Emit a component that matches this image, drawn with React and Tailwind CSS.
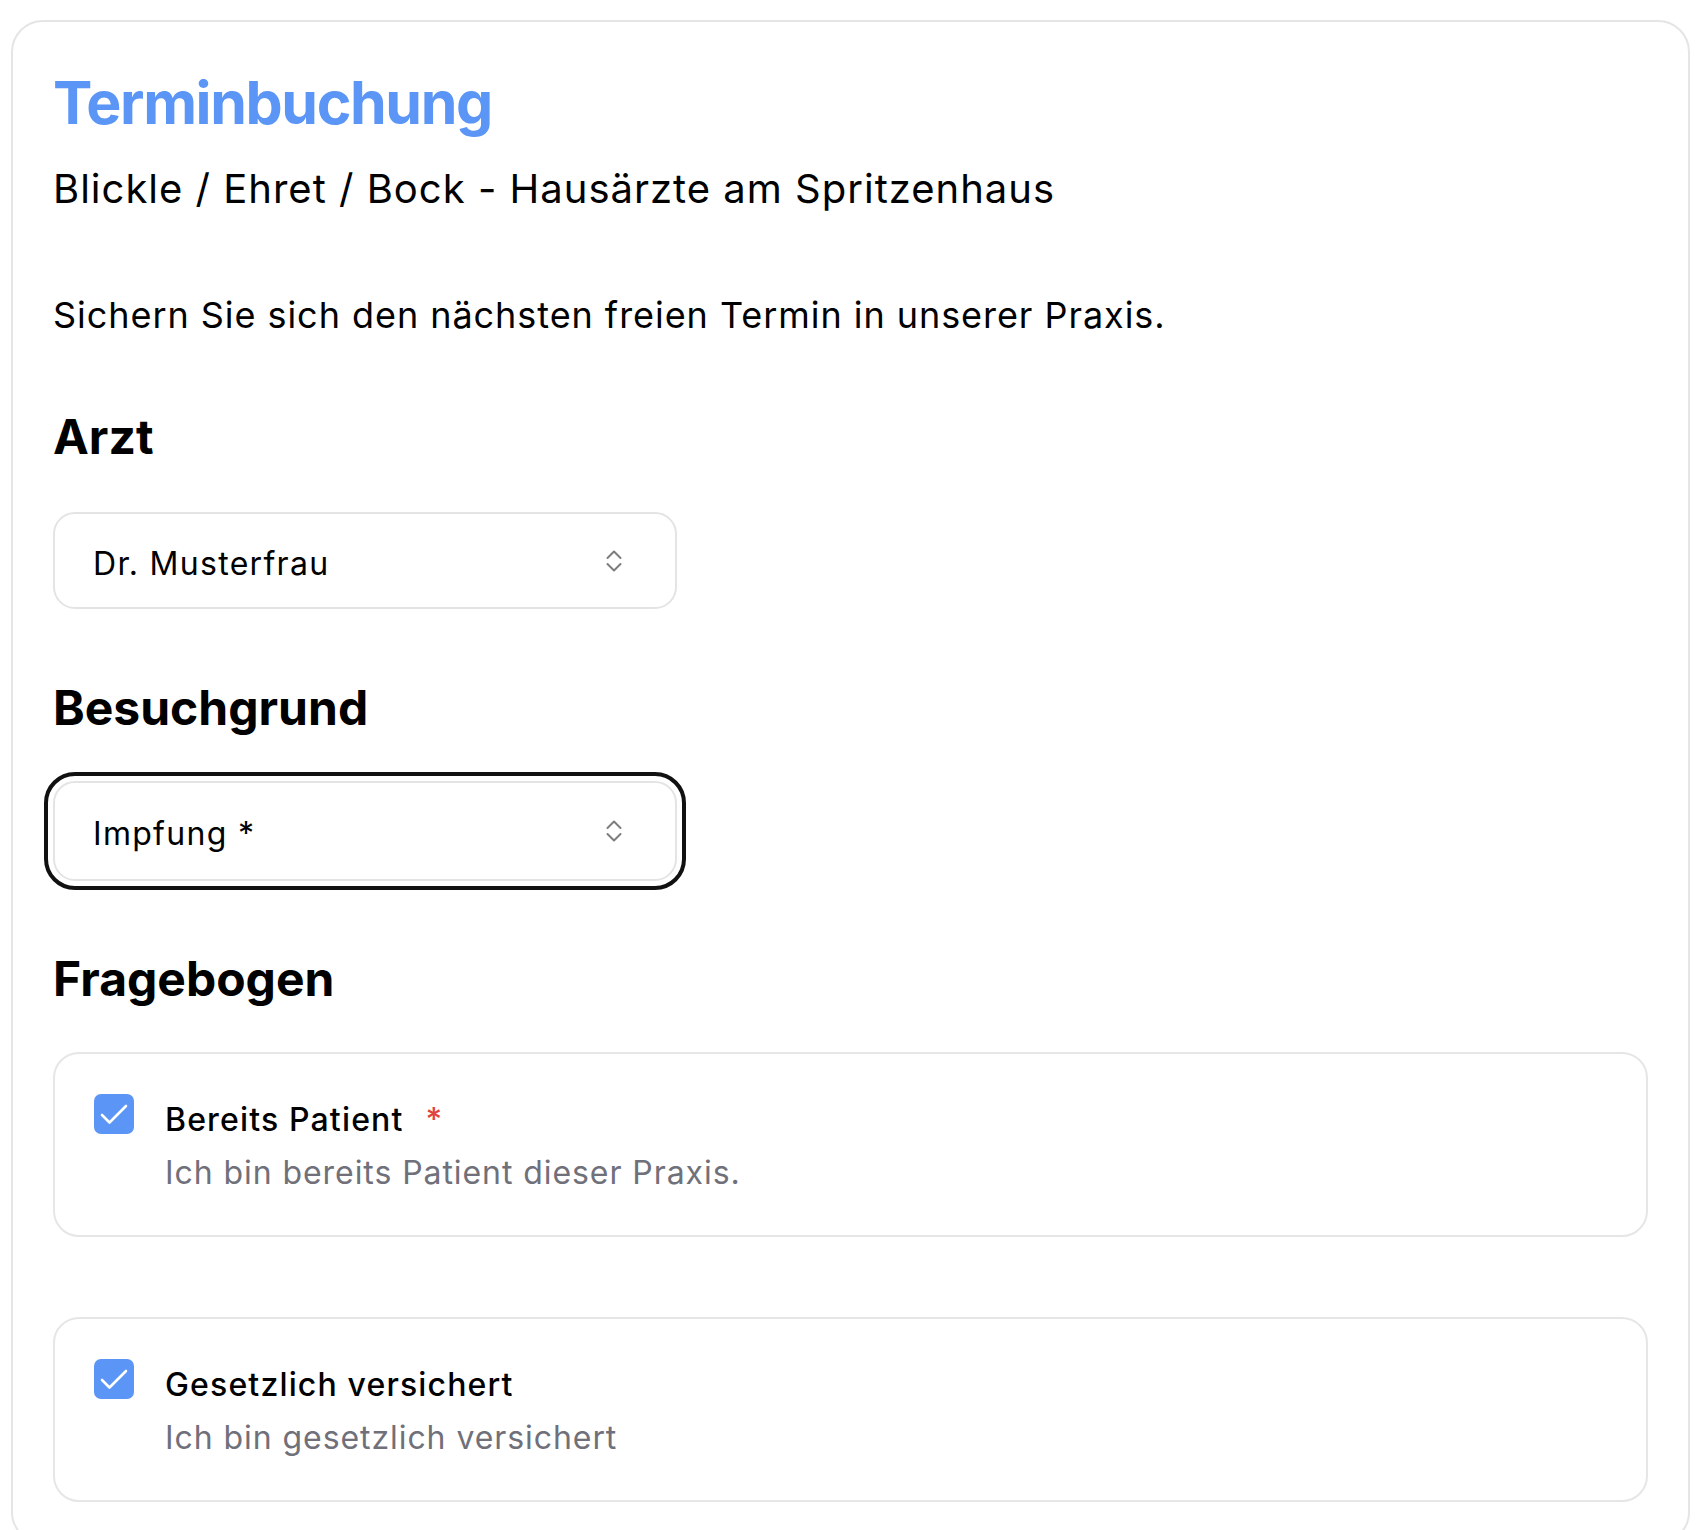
import React from "react";

function UpDownIcon() {
  return (
    <svg width="16" height="24" viewBox="0 0 16 24" fill="none" stroke="#7d7d7d" strokeWidth="2" strokeLinecap="round" strokeLinejoin="round">
      <path d="M1.5 9 L8 2.5 L14.5 9" />
      <path d="M1.5 15 L8 21.5 L14.5 15" />
    </svg>
  );
}

function SelectBox({ value, focused }) {
  return (
    <div
      className={
        "flex w-[624px] items-center justify-between rounded-[22px] border-2 border-[#e4e4e4] bg-white pl-[38px] pr-[53px] " +
        (focused ? "h-[100px] outline-4 outline-[#111111] outline-offset-[5px]" : "h-[97px]")
      }
    >
      <span className="mt-[6px] text-[32px] leading-[48px] tracking-[1.3px] text-black">{value}</span>
      <UpDownIcon />
    </div>
  );
}

function CheckIcon() {
  return (
    <div className="flex h-[40px] w-[40px] shrink-0 items-center justify-center rounded-[7px] bg-[#5b95f5]">
      <svg width="40" height="40" viewBox="0 0 40 40" fill="none" stroke="white" strokeWidth="2.6" strokeLinecap="round" strokeLinejoin="round">
        <path d="M8 21 L15.5 28.5 L32 12" />
      </svg>
    </div>
  );
}

function QuestionCard({ label, hint, required }) {
  return (
    <div className="flex items-start gap-[31px] rounded-[26px] border-2 border-[#e6e6e6] bg-white px-[39px] pt-[40px] pb-[38px]">
      <CheckIcon />
      <div className="flex flex-col pt-[2px]">
        <div className="text-[32px] leading-[48px] font-medium tracking-[1.15px] text-black">
          {label}
          {required && <span className="ml-[22px] font-medium text-[#e0443e]">*</span>}
        </div>
        <div className="mt-[5px] text-[32px] leading-[48px] tracking-[0.93px] text-[#70707a]">{hint}</div>
      </div>
    </div>
  );
}

export default function App() {
  return (
    <div
      className="min-h-screen bg-white pt-[20px] pl-[11px] pr-[18px]"
      style={{ fontFamily: "Inter, 'Noto Sans', sans-serif" }}
    >
      <div className="rounded-[32px] border-2 border-[#e5e5e5] px-[40px] pt-[51px] pb-[40px]">
        <h1 className="text-[59px] leading-[60px] font-bold tracking-[-1.4px] text-[#5b95f5]">Terminbuchung</h1>
        <p className="mt-[32px] text-[40px] leading-[48px] tracking-[1px] text-black">
          Blickle / Ehret / Bock - Hausärzte am Spritzenhaus
        </p>
        <p className="mt-[78px] text-[36px] leading-[48px] tracking-[0.95px] text-black">
          Sichern Sie sich den nächsten freien Termin in unserer Praxis.
        </p>

        <h2 className="mt-[70px] text-[48px] leading-[56px] font-bold text-black">Arzt</h2>
        <div className="mt-[47px]">
          <SelectBox value="Dr. Musterfrau" />
        </div>

        <h2 className="mt-[71px] text-[48px] leading-[56px] font-bold text-black">Besuchgrund</h2>
        <div className="mt-[45px]">
          <SelectBox value="Impfung *" focused />
        </div>

        <h2 className="mt-[70px] text-[48px] leading-[56px] font-bold text-black">Fragebogen</h2>
        <div className="mt-[45px] flex flex-col">
          <QuestionCard label="Bereits Patient" hint="Ich bin bereits Patient dieser Praxis." required />
          <div className="mt-[80px]">
            <QuestionCard label="Gesetzlich versichert" hint="Ich bin gesetzlich versichert" />
          </div>
        </div>
      </div>
    </div>
  );
}
